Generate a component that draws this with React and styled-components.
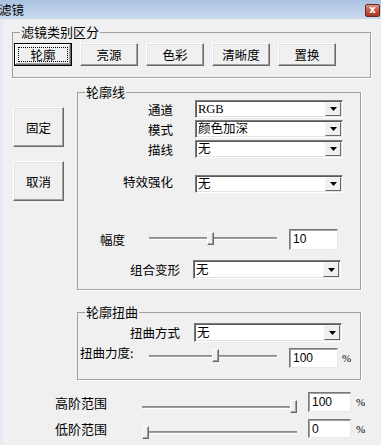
import styled, { createGlobalStyle } from "styled-components";

const GlobalStyle = createGlobalStyle`
  html, body { margin: 0; padding: 0; background: #f0f0f0; }
  body {
    font-family: "Noto Sans CJK SC", "Liberation Sans", sans-serif;
    font-size: 12.5px;
    color: #000;
  }
  * { box-sizing: border-box; }
`;

const Window = styled.div`
  width: 381px;
  height: 445px;
  overflow: hidden;
  background: #f0f0f0;
  display: flex;
  flex-direction: column;
`;

const TitleBar = styled.div`
  height: 19px;
  flex: none;
  display: flex;
  align-items: center;
  justify-content: space-between;
  padding-right: 1px;
  background: linear-gradient(#a8c2e0, #cadbef);
`;

const Title = styled.span`
  font-size: 12.5px;
  line-height: 19px;
  margin-left: -1px;
`;

const CloseBtn = styled.div`
  width: 15px;
  height: 13px;
  margin-top: 1px;
  border: 1px solid #6e2a20;
  border-radius: 2px;
  background: linear-gradient(#dc9783, #c0523e 55%, #a63827);
  color: #fff;
  font: bold 10px/10px "DejaVu Sans", sans-serif;
  display: flex;
  align-items: center;
  justify-content: center;
`;

const Body = styled.div`
  flex: 1;
  display: flex;
  flex-direction: column;
  box-shadow: inset 3px 0 0 #e3ebf5;
`;

const Group = styled.fieldset`
  margin: ${p => p.$mt || 0}px 0 0 ${p => p.$ml || 0}px;
  width: ${p => p.$w}px;
  min-inline-size: 0;
  padding: ${p => p.$pad};
  border: 1px solid #a0a0a0;
  box-shadow: 1px 1px 0 #fff;
`;

const Legend = styled.legend`
  margin-left: ${p => p.$ml || 6}px;
  padding: 0 1px;
  font-size: 13px;
  line-height: 16px;
`;

const TabRow = styled.div`
  display: flex;
  gap: 8px;
`;

const PushButton = styled.div`
  width: ${p => p.$w}px;
  height: ${p => p.$h}px;
  flex: none;
  display: flex;
  align-items: center;
  justify-content: center;
  background: #f0f0f0;
  border: 1px solid;
  border-color: #fff #696969 #696969 #fff;
  box-shadow: inset -1px -1px 0 #a0a0a0, inset 1px 1px 0 #e3e3e3;
  font-size: 12.5px;
  ${p => p.$focused && `
    border-color: #000;
    box-shadow: inset -1px -1px 0 #696969, inset 1px 1px 0 #fff, inset -2px -2px 0 #a0a0a0;
    outline: 1px dotted #000;
    outline-offset: -5px;
  `}
`;

const Main = styled.div`
  display: flex;
  align-items: flex-start;
  margin-top: 6px;
`;

const SideColumn = styled.div`
  display: flex;
  flex-direction: column;
  gap: 14px;
  padding-left: 13px;
  margin-top: 23px;
`;

const RightColumn = styled.div`
  margin-left: 13px;
  width: 284px;
  display: flex;
  flex-direction: column;
`;

const Row = styled.div`
  display: flex;
  align-items: center;
  height: ${p => p.$h}px;
  margin-top: ${p => p.$mt || 0}px;
  padding-left: ${p => p.$pl || 0}px;
`;

const Label = styled.span`
  flex: none;
  width: ${p => p.$w}px;
  text-align: ${p => p.$align || "left"};
  font-size: ${p => p.$fs || 12.5}px;
  white-space: nowrap;
  margin-bottom: ${p => p.$up || 0}px;
`;

const Combo = styled.div`
  flex: none;
  display: flex;
  width: 148px;
  height: ${p => p.$h || 18}px;
  margin-left: ${p => p.$ml}px;
  background: #fff;
  border: 1px solid;
  border-color: #7a7a7a #fff #fff #7a7a7a;
  box-shadow: inset 1px 1px 0 #5a5a5a, inset -1px -1px 0 #e3e3e3;
`;

const ComboText = styled.span`
  flex: 1;
  padding-left: 2px;
  font-family: "Liberation Serif", "Noto Sans CJK SC", serif;
  font-size: 12.5px;
  line-height: ${p => (p.$h || 18) - 3}px;
  padding-top: 1px;
`;

const DropButton = styled.span`
  width: 16px;
  margin: 1px 1px 1px 0;
  display: flex;
  align-items: center;
  justify-content: center;
  background: #f0f0f0;
  border: 1px solid;
  border-color: #f4f4f4 #696969 #696969 #f4f4f4;
`;

const Edit = styled.div`
  flex: none;
  width: ${p => p.$w}px;
  height: ${p => p.$h}px;
  margin-left: ${p => p.$ml}px;
  background: #fff;
  border: 1px solid;
  border-color: #7a7a7a #e8e8e8 #e8e8e8 #7a7a7a;
  box-shadow: inset 1px 1px 0 #a0a0a0;
  padding: 2px 0 0 3px;
  font-family: "Liberation Sans", Arial, sans-serif;
  font-size: 12px;
  line-height: 14px;
`;

const Percent = styled.span`
  margin-left: ${p => p.$ml || 4}px;
  font-family: "Liberation Serif", serif;
  font-size: 11px;
  align-self: flex-start;
  margin-top: 4px;
`;

const Slider = styled.div`
  position: relative;
  flex: none;
  width: ${p => p.$w}px;
  height: 14px;
  display: flex;
  align-items: center;
  margin-left: ${p => p.$ml || 0}px;
  margin-top: ${p => p.$dy > 0 ? p.$dy : 0}px;
  margin-bottom: ${p => p.$dy < 0 ? -p.$dy : 0}px;
`;

const Track = styled.div`
  flex: 1;
  height: 3px;
  border-top: 1px solid #8c8c8c;
  border-bottom: 1px solid #fff;
  background: #a0a0a0;
`;

const Thumb = styled.div`
  position: absolute;
  top: 0;
  width: 7px;
  height: 13px;
  background: #f0f0f0;
  border: 1px solid;
  border-color: #fff #696969 #696969 #fff;
  box-shadow: inset -1px -1px 0 #a0a0a0;
`;

function Arrow() {
  return (
    <svg width="7" height="4" viewBox="0 0 7 4">
      <polygon points="0,0 7,0 3.5,4" fill="#000" />
    </svg>
  );
}

function Select({ value, ml, h }) {
  return (
    <Combo $ml={ml} $h={h}>
      <ComboText $h={h}>{value}</ComboText>
      <DropButton><Arrow /></DropButton>
    </Combo>
  );
}

function TrackBar({ w, pos, ml, dy }) {
  return (
    <Slider $w={w} $ml={ml} $dy={dy}>
      <Track />
      <Thumb style={{ left: `${pos * (w - 7)}px` }} />
    </Slider>
  );
}

const tabs = ["轮廓", "亮源", "色彩", "清晰度", "置换"];

export default function App() {
  return (
    <>
      <GlobalStyle />
      <Window>
        <TitleBar>
          <Title>滤镜</Title>
          <CloseBtn>x</CloseBtn>
        </TitleBar>
        <Body>
          <Group $mt={5} $ml={12} $w={359} $pad="3px 0 11px 1px">
            <Legend $ml={6}>滤镜类别区分</Legend>
            <TabRow>
              {tabs.map((t, i) => (
                <PushButton key={t} $w={58} $h={23} $focused={i === 0}>{t}</PushButton>
              ))}
            </TabRow>
          </Group>

          <Main>
            <SideColumn>
              <PushButton $w={51} $h={40}>固定</PushButton>
              <PushButton $w={51} $h={40}>取消</PushButton>
            </SideColumn>

            <RightColumn>
              <Group $w={284} $pad="0 0 10px 0">
                <Legend $ml={7}>轮廓线</Legend>
                <Row $h={18}>
                  <Label $w={95} $align="right">通道</Label>
                  <Select value="RGB" ml={22} />
                </Row>
                <Row $h={18} $mt={2}>
                  <Label $w={95} $align="right">模式</Label>
                  <Select value="颜色加深" ml={22} />
                </Row>
                <Row $h={18} $mt={2}>
                  <Label $w={95} $align="right">描线</Label>
                  <Select value="无" ml={22} />
                </Row>
                <Row $h={18} $mt={17}>
                  <Label $w={95} $align="right" $up={6}>特效强化</Label>
                  <Select value="无" ml={22} />
                </Row>
                <Row $h={21} $mt={36} $pl={22}>
                  <Label $w={49}>幅度</Label>
                  <TrackBar w={128} pos={0.48} dy={-2} />
                  <Edit $w={49} $h={21} $ml={12}>10</Edit>
                </Row>
                <Row $h={19} $mt={10}>
                  <Label $w={102} $align="right">组合变形</Label>
                  <Select value="无" ml={13} h={19} />
                </Row>
              </Group>

              <Group $mt={14} $w={284} $pad="0 0 11px 0">
                <Legend $ml={7}>轮廓扭曲</Legend>
                <Row $h={19} $mt={3}>
                  <Label $w={102} $align="right">扭曲方式</Label>
                  <Select value="无" ml={14} h={19} />
                </Row>
                <Row $h={20} $mt={6} $pl={2}>
                  <Label $w={69} $up={12}>扭曲力度:</Label>
                  <TrackBar w={128} pos={0.52} dy={-4} />
                  <Edit $w={49} $h={20} $ml={12}>100</Edit>
                  <Percent>%</Percent>
                </Row>
              </Group>
            </RightColumn>
          </Main>

          <Row $h={20} $mt={12} $pl={55}>
            <Label $w={87} $fs={13}>高阶范围</Label>
            <TrackBar w={155} pos={1} dy={10} />
            <Edit $w={43} $h={20} $ml={11}>100</Edit>
            <Percent $ml={5}>%</Percent>
          </Row>
          <Row $h={19} $mt={7} $pl={55}>
            <Label $w={87} $fs={13}>低阶范围</Label>
            <TrackBar w={155} pos={0} dy={8} />
            <Edit $w={43} $h={19} $ml={11}>0</Edit>
            <Percent $ml={5}>%</Percent>
          </Row>
        </Body>
      </Window>
    </>
  );
}
